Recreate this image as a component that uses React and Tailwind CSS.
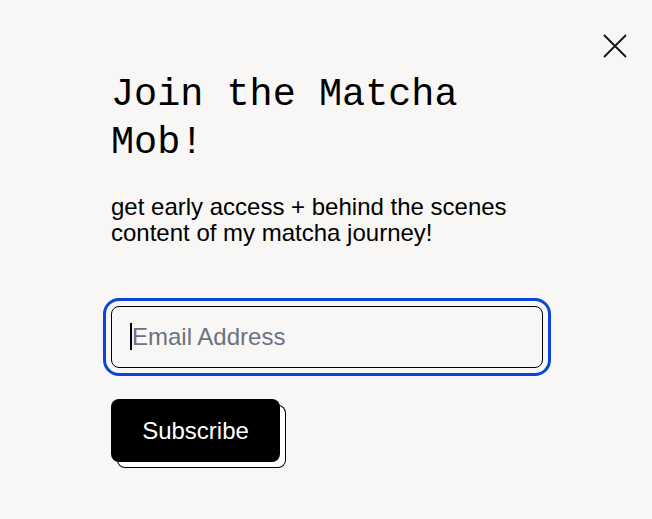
import React from 'react';

export default function App() {
  return (
    <div className="w-[652px] h-[519px] bg-[#f8f7f5] overflow-hidden flex justify-between pl-[111px] pr-[25px] pt-[34px]">
      <div className="pt-[37px] flex flex-col items-start">
        <h1 className="font-['Liberation_Mono',monospace] text-[38.5px] leading-[48px] text-black font-normal w-[420px]">
          Join the Matcha Mob!
        </h1>
        <p className="mt-[27px] font-['Liberation_Sans',Arial,sans-serif] text-[24px] leading-[26px] text-black w-[420px]">
          get early access + behind the scenes content of my matcha journey!
        </p>

        <form className="mt-[60px] flex flex-col items-start gap-[31px]" onSubmit={(e) => e.preventDefault()}>
          <div className="relative">
            <input
              type="email"
              placeholder="Email Address"
              className="w-[432px] h-[62px] px-5 rounded-lg border border-black bg-transparent outline-[3px] outline-solid outline-[#0a44d8] outline-offset-[5px] font-['Liberation_Sans',Arial,sans-serif] text-[24px] text-black placeholder:text-[#6b7280] caret-black"
            />
            {/* text caret */}
            <span className="absolute left-[19px] top-[17px] w-[2px] h-[27px] bg-black pointer-events-none" />
          </div>
          <button
            type="submit"
            className="w-[169px] h-[63px] rounded-lg bg-black text-white font-['Liberation_Sans',Arial,sans-serif] text-[24px] shadow-[6px_6px_0_-1px_#ffffff,6px_6px_0_0_#000000]"
          >
            Subscribe
          </button>
        </form>
      </div>

      <button className="w-6 h-6 flex items-center justify-center shrink-0" aria-label="Close">
        <svg width="24" height="24" viewBox="0 0 24 24" fill="none" stroke="#111" strokeWidth="1.8">
          <path d="M1 1 L23 23 M23 1 L1 23" />
        </svg>
      </button>
    </div>
  );
}
